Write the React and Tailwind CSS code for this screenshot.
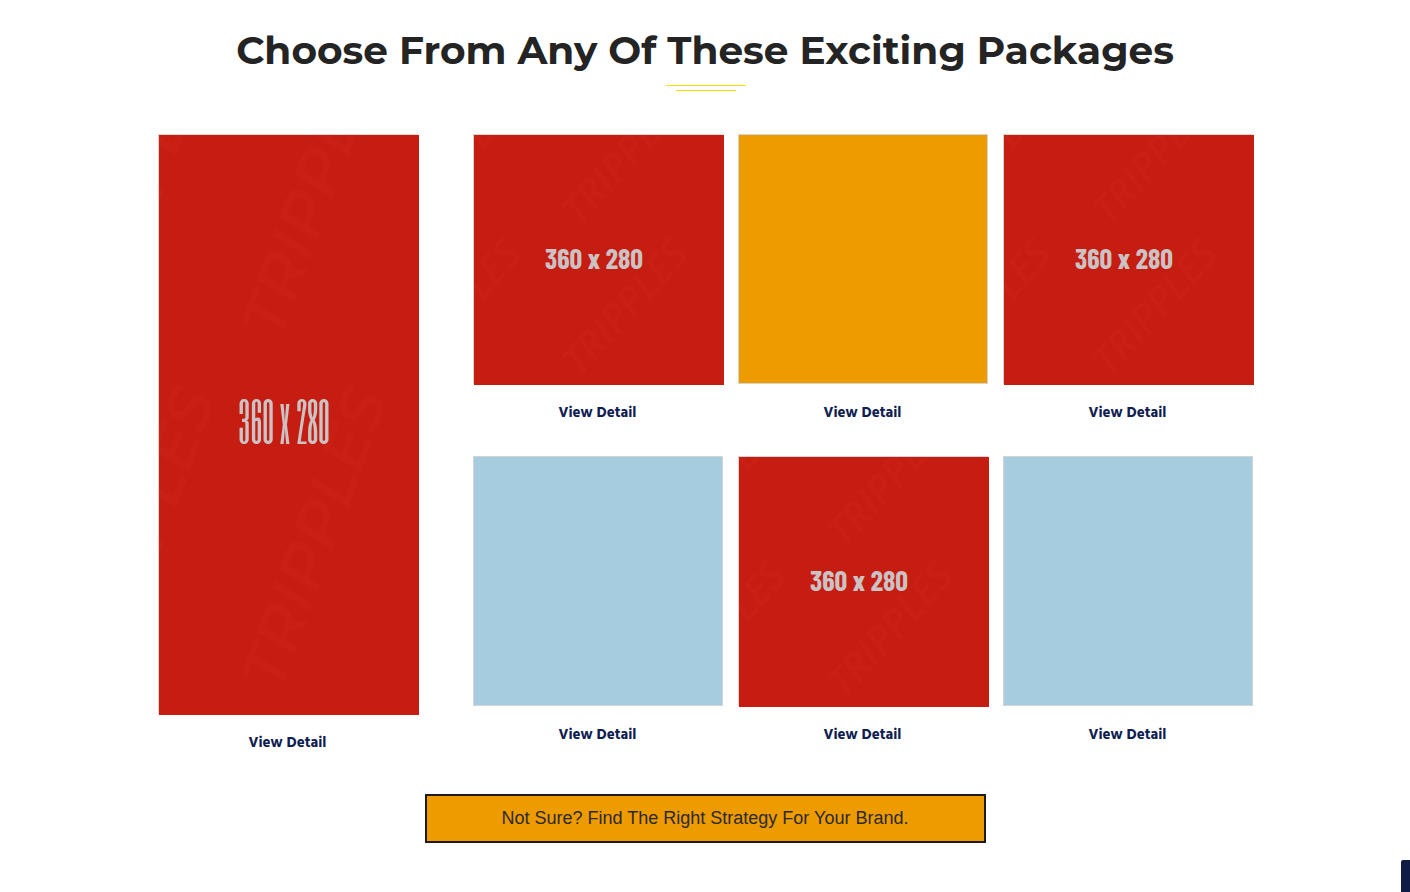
const SQUARE_MARKS = [
  [106, 92],
  [106, 243],
  [-61, 92],
  [-61, 243],
];

const TALL_MARKS = [
  [122, 206],
  [122, 558],
  [-50, 206],
  [-50, 558],
];

function Placeholder({ tall = false }) {
  const marks = tall ? TALL_MARKS : SQUARE_MARKS;
  return (
    <svg
      viewBox={tall ? "0 0 260 580" : "0 0 250 250"}
      className={
        tall
          ? "block h-[580px] w-[260px] max-w-none shrink-0 bg-[#c61d12]"
          : "block size-[250px] max-w-none shrink-0 bg-[#c61d12]"
      }
      role="img"
      aria-label="360 x 280"
    >
      {marks.map(([x, y]) => (
        <text
          key={`${x}-${y}`}
          x={x}
          y={y}
          transform={`rotate(${tall ? -70 : -48} ${x} ${y})`}
          fill="#ca1f14"
          fontFamily={tall ? "Montserrat, 'Open Sans', sans-serif" : "'Open Sans', sans-serif"}
          fontStyle="italic"
          fontWeight="600"
          fontSize={tall ? 63 : 40}
        >
          TRIPPLES
        </text>
      ))}
      <text
        x={tall ? 125 : 120}
        y={tall ? 309 : 134}
        textAnchor="middle"
        fill="#cbc3c3"
        fontFamily={
          tall
            ? "'Six Caps', 'Barlow Condensed', sans-serif"
            : "'Barlow Condensed', 'Open Sans', sans-serif"
        }
        fontWeight={tall ? 400 : 700}
        fontSize={tall ? 53 : 28}
      >
        360 x 280
      </text>
    </svg>
  );
}

const PACKAGES = [
  { id: 1, fill: "image" },
  { id: 2, fill: "orange" },
  { id: 3, fill: "image" },
  { id: 4, fill: "blue" },
  { id: 5, fill: "image" },
  { id: 6, fill: "blue" },
];

const FILLS = {
  image: "bg-white",
  orange: "bg-[#ee9b00]",
  blue: "bg-[#a6cce0]",
};

function DetailLink({ id }) {
  return (
    <a
      href={`#package-${id}`}
      className="mt-[17px] font-['Hind','Open_Sans',sans-serif] text-[15px] leading-6 font-bold text-[#0f2050]"
    >
      View Detail
    </a>
  );
}

export default function App() {
  return (
    <main className="flex min-h-screen flex-col items-center bg-white pt-5 pb-12">
      <h2 className="text-center font-['Montserrat','Inter',sans-serif] text-[39px] leading-[60px] font-bold text-[#242424]">
        Choose From Any Of These Exciting Packages
      </h2>
      <div className="mt-[5px] flex flex-col items-center gap-1 pl-px">
        <span className="h-px w-20 bg-[#fbe000]" />
        <span className="h-px w-15 bg-[#fbe000]" />
      </div>

      <section className="mt-[43px] flex flex-wrap justify-center gap-[55px]">
        <article className="flex flex-col items-center">
          <div className="h-[580px] w-[260px] border border-[#d4d4d4]">
            <Placeholder tall />
          </div>
          <DetailLink id={0} />
        </article>

        <div className="grid grid-cols-1 content-start gap-x-[15px] gap-y-[31px] sm:grid-cols-2 lg:grid-cols-3">
          {PACKAGES.map(({ id, fill }) => (
            <article key={id} className="flex flex-col items-center">
              <div className={`size-[250px] border border-[#d4d4d4] ${FILLS[fill]}`}>
                {fill === "image" && <Placeholder />}
              </div>
              <DetailLink id={id} />
            </article>
          ))}
        </div>
      </section>

      <a
        href="#strategy"
        className="mt-[39px] w-full max-w-[561px] border-2 border-[#1b1b1b] bg-[#ee9b00] py-2 text-center font-['Liberation_Sans',Arial,sans-serif] text-lg leading-[29px] text-[#2a2a24]"
      >
        Not Sure? Find The Right Strategy For Your Brand.
      </a>

      <aside className="fixed right-0 bottom-0 h-8 w-[9px] rounded-tl-xs bg-[#0f1c46]" />
    </main>
  );
}
